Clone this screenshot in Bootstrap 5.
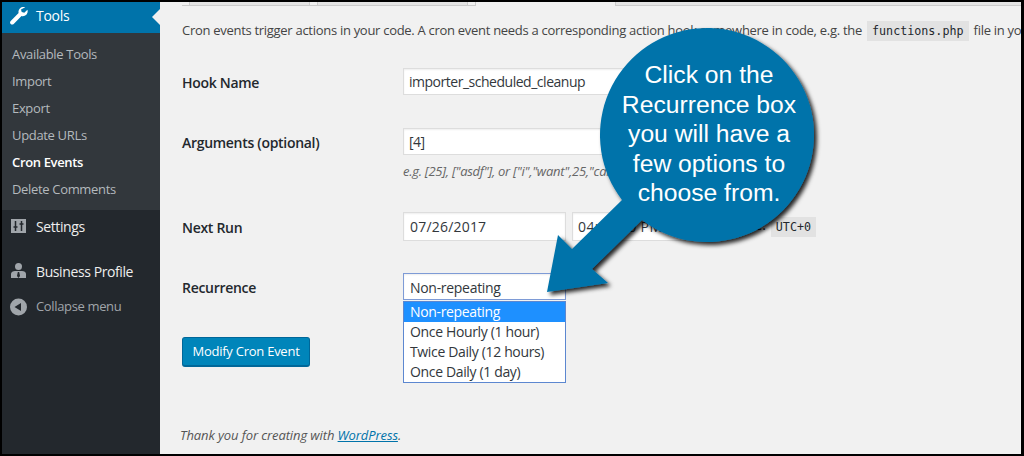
<!DOCTYPE html>
<html lang="en"><head><meta charset="utf-8">
<link href="https://cdn.jsdelivr.net/npm/bootstrap@5.3.0/dist/css/bootstrap.min.css" rel="stylesheet">
<style>
html,body{height:100%;}
body{background:#000;margin:0;overflow:hidden;font-family:"Open Sans",sans-serif;font-size:13px;color:#23282d;}
.frame{height:456px;padding:2px 3px 2px 2px;position:relative;}
.side{width:158px;flex:none;background:#23282d;}
.side-cur{height:31px;background:#0073aa;color:#fff;font-size:14px;letter-spacing:-.3px;position:relative;padding-bottom:4px;}
.side-cur::after{content:"";position:absolute;right:0;top:7px;border:8px solid transparent;border-right-color:#f1f1f1;border-left:0;}
.side-ico{width:34px;flex:none;padding-left:8px;display:flex;}
.sub{background:#32373c;padding:8px 0 7px 10px;color:#b4b9be;letter-spacing:-.33px;}
.sub div{height:27px;line-height:27px;}
.sub .on{color:#fff;font-weight:600;letter-spacing:-.35px;}
.side-item{color:#eee;font-size:14px;height:34px;letter-spacing:-.4px;}
.side-first{margin-top:-1px;}
.side-second{margin-top:11px;}
.collapse-row{color:#a0a5aa;letter-spacing:-.35px;height:34px;margin-top:2px;}
.page{flex:1;background:#f1f1f1;min-width:0;padding:0 0 0 22px;overflow:hidden;position:relative;}
.tabline{height:4px;display:flex;}
.tabseg{height:4px;border-bottom:1px solid #ccc;display:flex;}
.tabfill{height:3px;background:#e4e4e4;border-left:1px solid #ccc;border-right:1px solid #ccc;}
.tabgap{width:139px;flex:none;}
.intro{margin:0;position:absolute;left:22px;top:19px;white-space:nowrap;color:#444;letter-spacing:-.29px;}
.codeb{font-family:"DejaVu Sans Mono",monospace;font-size:11.7px;letter-spacing:0;background:#e2e2e2;padding:3px 5px;margin:0 2px;color:#23282d;}
.utcbox{padding:0 5px;line-height:20px;height:20px;margin:1px 0 0;}
.frow{display:flex;align-items:center;}
.flabel{width:221px;flex:none;font-weight:600;color:#23282d;font-size:14px;letter-spacing:-.3px;padding-top:2px;}
.finput{background:#fff;border:1px solid #ddd;height:27px;line-height:25px;padding:0 5px;color:#32373c;font-size:14px;box-shadow:inset 0 1px 2px rgba(0,0,0,.07);}
.w-hook{width:230px;letter-spacing:-.48px;}
.w-date{width:163px;height:29px;line-height:27px;padding:0 6px;letter-spacing:.2px;}
.w-time{width:128px;height:29px;line-height:27px;margin-left:6px;letter-spacing:.4px;}
.tzlabel{margin-left:auto;padding-right:5px;font-weight:600;font-size:13px;white-space:nowrap;}
.tzrow{width:250px;display:flex;align-items:center;}
.hint{color:#666;font-style:italic;margin-left:221px;letter-spacing:-.25px;}
.selbox{width:163px;position:relative;}
.openbox{border-color:#7e9bd6;width:163px;padding:0 6px;letter-spacing:-.3px;line-height:27px;}
.opts{position:absolute;left:0;top:28px;width:163px;background:#fff;border:1px solid #5c87d0;font-size:14px;letter-spacing:-.35px;}
.opts div{height:20px;line-height:20px;padding:0 6px;color:#32373c;}
.opts .sel{background:#1e90ff;color:#fff;}
.wpbtn{background:#0085ba;border:1px solid #006799;border-bottom-width:2px;border-radius:3px;color:#fff;font-size:13px;height:30px;width:128px;padding:0;line-height:26px;letter-spacing:-.25px;}
.foot{color:#555;font-style:italic;position:absolute;left:20px;top:424px;letter-spacing:-.1px;}
.foot a{color:#0073aa;}
.bubble-text{position:absolute;left:602px;top:29px;width:214px;height:214px;color:#fff;font-family:"Liberation Sans",Arial,sans-serif;font-size:24.7px;line-height:29.5px;text-align:center;padding-top:31px;}
.pointer{position:absolute;left:0;top:0;width:1024px;height:456px;}
</style></head><body>
<div class="frame d-flex">
  <nav class="side d-flex flex-column">
    <div class="side-cur d-flex align-items-center">
      <span class="side-ico"><svg width="20" height="20" viewBox="0 0 20 20"><path fill="#fff" transform="translate(-1.5 0)" d="M16.700 1.200c-1.800-.6-3.900-.2-5.300 1.200-1.300 1.300-1.700 3.100-1.300 4.700L2.200 14.900c-.9.900-.9 2.200 0 3 .8.900 2.100.900 3 0L13 10c1.600.500 3.500.100 4.800-1.200 1.300-1.400 1.700-3.400 1.100-5.100l-3.100 3-2.600-.7-.7-2.600z"/></svg></span>
      <span>Tools</span>
    </div>
    <div class="sub">
      <div>Available Tools</div><div>Import</div><div>Export</div><div>Update URLs</div><div class="on">Cron Events</div><div>Delete Comments</div>
    </div>
    <div class="side-item side-first d-flex align-items-center">
      <span class="side-ico"><svg width="20" height="20" viewBox="0 0 20 20"><path fill="#a0a5aa" d="M1 3h15v14H1z"/><path stroke="#23282d" stroke-width="1.500" fill="none" d="M5.500 5v10M3.500 11h4M11.500 5v10M9.500 8h4"/></svg></span>
      <span>Settings</span>
    </div>
    <div class="side-item side-second d-flex align-items-center">
      <span class="side-ico"><svg width="20" height="20" viewBox="0 0 20 20"><circle cx="8.500" cy="5.500" r="3.500" fill="#a0a5aa"/><path fill="#a0a5aa" d="M1 17v-4c0-2 2-3 4-3h7c2 0 4 1 4 3v4z"/><path fill="#23282d" d="M7.800 11h1.400l.8 4-1.500 2-1.500-2z"/></svg></span>
      <span>Business Profile</span>
    </div>
    <div class="collapse-row d-flex align-items-center">
      <span class="side-ico"><svg width="18" height="18" viewBox="0 0 18 18"><circle cx="8.500" cy="9" r="8.500" fill="#a0a5aa"/><path fill="#23282d" d="M11 5v8L4.500 9z"/></svg></span>
      <span>Collapse menu</span>
    </div>
  </nav>
  <main class="page">
    <div class="tabline">
      <div class="tabseg" style="width:294px"><div class="tabfill" style="margin-left:7px;width:121px"></div><div class="tabfill" style="margin-left:7px;width:152px"></div><div class="tabfill" style="width:8px;background:#f1f1f1;border-left:0"></div></div>
      <div class="tabgap"></div>
      <div class="tabseg flex-fill"><div class="tabfill" style="width:100%;border-right:0"></div></div>
    </div>
    <p class="intro">Cron events trigger actions in your code. A cron event needs a corresponding action hook somewhere in code, e.g. the <span class="codeb">functions.php</span> file in your theme.</p>
    <div class="frow" style="margin-top:62px"><div class="flabel">Hook Name</div><div class="finput w-hook">importer_scheduled_cleanup</div></div>
    <div class="frow" style="margin-top:33px"><div class="flabel">Arguments (optional)</div><div class="finput w-hook">[4]</div></div>
    <div class="hint" style="margin-top:7px">e.g. [25], ["asdf"], or ["i","want",25,"cakes"]</div>
    <div class="frow" style="margin-top:30px"><div class="flabel">Next Run</div><div class="finput w-date">07/26/2017</div>
      <div class="tzrow"><div class="finput w-time">04:00:00 PM</div><span class="tzlabel">Timezone:</span><code class="codeb utcbox">UTC+0</code></div></div>
    <div class="frow" style="margin-top:32px"><div class="flabel">Recurrence</div>
      <div class="selbox"><div class="finput openbox">Non-repeating</div>
        <div class="opts"><div class="sel">Non-repeating</div><div>Once Hourly (1 hour)</div><div>Twice Daily (12 hours)</div><div>Once Daily (1 day)</div></div>
      </div></div>
    <button class="wpbtn" style="margin-top:37px" type="button">Modify Cron Event</button>
    <div class="foot">Thank you for creating with <a href="#">WordPress</a>.</div>
  </main>
  <svg class="pointer" viewBox="0 0 1024 456"><defs><filter id="sh" x="-10%" y="-10%" width="120%" height="120%"><feDropShadow dx="3" dy="3" stdDeviation="2" flood-color="#000" flood-opacity=".85"/></filter></defs>
    <path filter="url(#sh)" fill="#0073aa" d="M547 292 558 235 572 249 622 200A107 107 0 1 1 642 220L592 269 608 283z"/></svg>
  <div class="bubble-text">Click on the<br>Recurrence box<br>you will have a<br>few options to<br>choose from.</div>
</div>
</body></html>
